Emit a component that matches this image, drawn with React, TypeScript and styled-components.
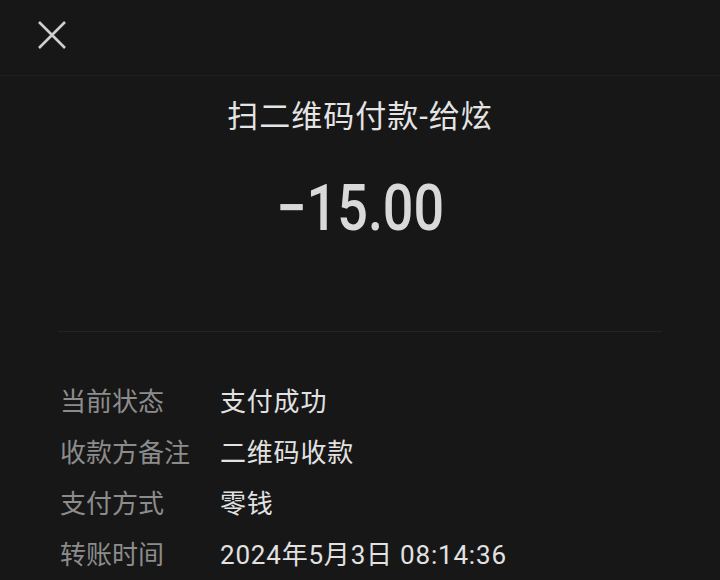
import React from 'react';
import styled, { createGlobalStyle } from 'styled-components';

const GlobalStyle = createGlobalStyle`
  html, body {
    margin: 0;
    padding: 0;
    background: #171717;
  }
  body {
    font-family: Roboto, "Noto Sans CJK SC", sans-serif;
  }
`;

const Page = styled.div`
  width: 720px;
  height: 580px;
  overflow: hidden;
  background: #171717;
  display: flex;
  flex-direction: column;
`;

const Header = styled.header`
  height: 75px;
  border-bottom: 1px solid #1f1f1f;
  display: flex;
  align-items: center;
  padding-left: 37px;
  box-sizing: content-box;
`;

const CloseButton = styled.button`
  width: 30px;
  height: 30px;
  padding: 0;
  border: none;
  background: transparent;
  display: flex;
  align-items: center;
  justify-content: center;
  margin-top: -6px;
`;

const Summary = styled.section`
  display: flex;
  flex-direction: column;
  align-items: center;
  padding-top: 21px;
`;

const Title = styled.h1`
  margin: 0;
  font-size: 31px;
  line-height: 40px;
  font-weight: 400;
  letter-spacing: 1px;
  color: #e4e4e4;
`;

const Amount = styled.div`
  margin-top: 36px;
  font-family: Roboto, sans-serif;
  font-size: 65px;
  line-height: 70px;
  font-weight: 500;
  color: #d9d9d9;
  transform: scaleX(0.83);
`;

const Divider = styled.hr`
  margin: 88px 58px 0;
  border: none;
  height: 1px;
  background: #232323;
`;

const Details = styled.dl`
  margin: 42px 0 0;
  padding: 0 60px;
  display: grid;
  grid-template-columns: 160px 1fr;
  grid-auto-rows: 51px;
  align-items: center;
`;

const Label = styled.dt`
  font-size: 26px;
  color: #8c8c8c;
`;

const Value = styled.dd`
  margin: 0;
  font-size: 26px;
  letter-spacing: 0.8px;
  color: #e2e2e2;
`;

const rows: [string, string][] = [
  ['当前状态', '支付成功'],
  ['收款方备注', '二维码收款'],
  ['支付方式', '零钱'],
  ['转账时间', '2024年5月3日 08:14:36'],
];

const CloseIcon = () => (
  <svg width="30" height="30" viewBox="0 0 30 30">
    <path d="M2 2 L28 28 M28 2 L2 28" stroke="#cfcfcf" strokeWidth="2.6" strokeLinecap="butt" fill="none" />
  </svg>
);

const App: React.FC = () => {
  return (
    <Page>
      <GlobalStyle />
      <Header>
        <CloseButton aria-label="关闭">
          <CloseIcon />
        </CloseButton>
      </Header>
      <Summary>
        <Title>扫二维码付款-给炫</Title>
        <Amount>−15.00</Amount>
      </Summary>
      <Divider />
      <Details>
        {rows.map(([label, value]) => (
          <React.Fragment key={label}>
            <Label>{label}</Label>
            <Value>{value}</Value>
          </React.Fragment>
        ))}
      </Details>
    </Page>
  );
};

export default App;
